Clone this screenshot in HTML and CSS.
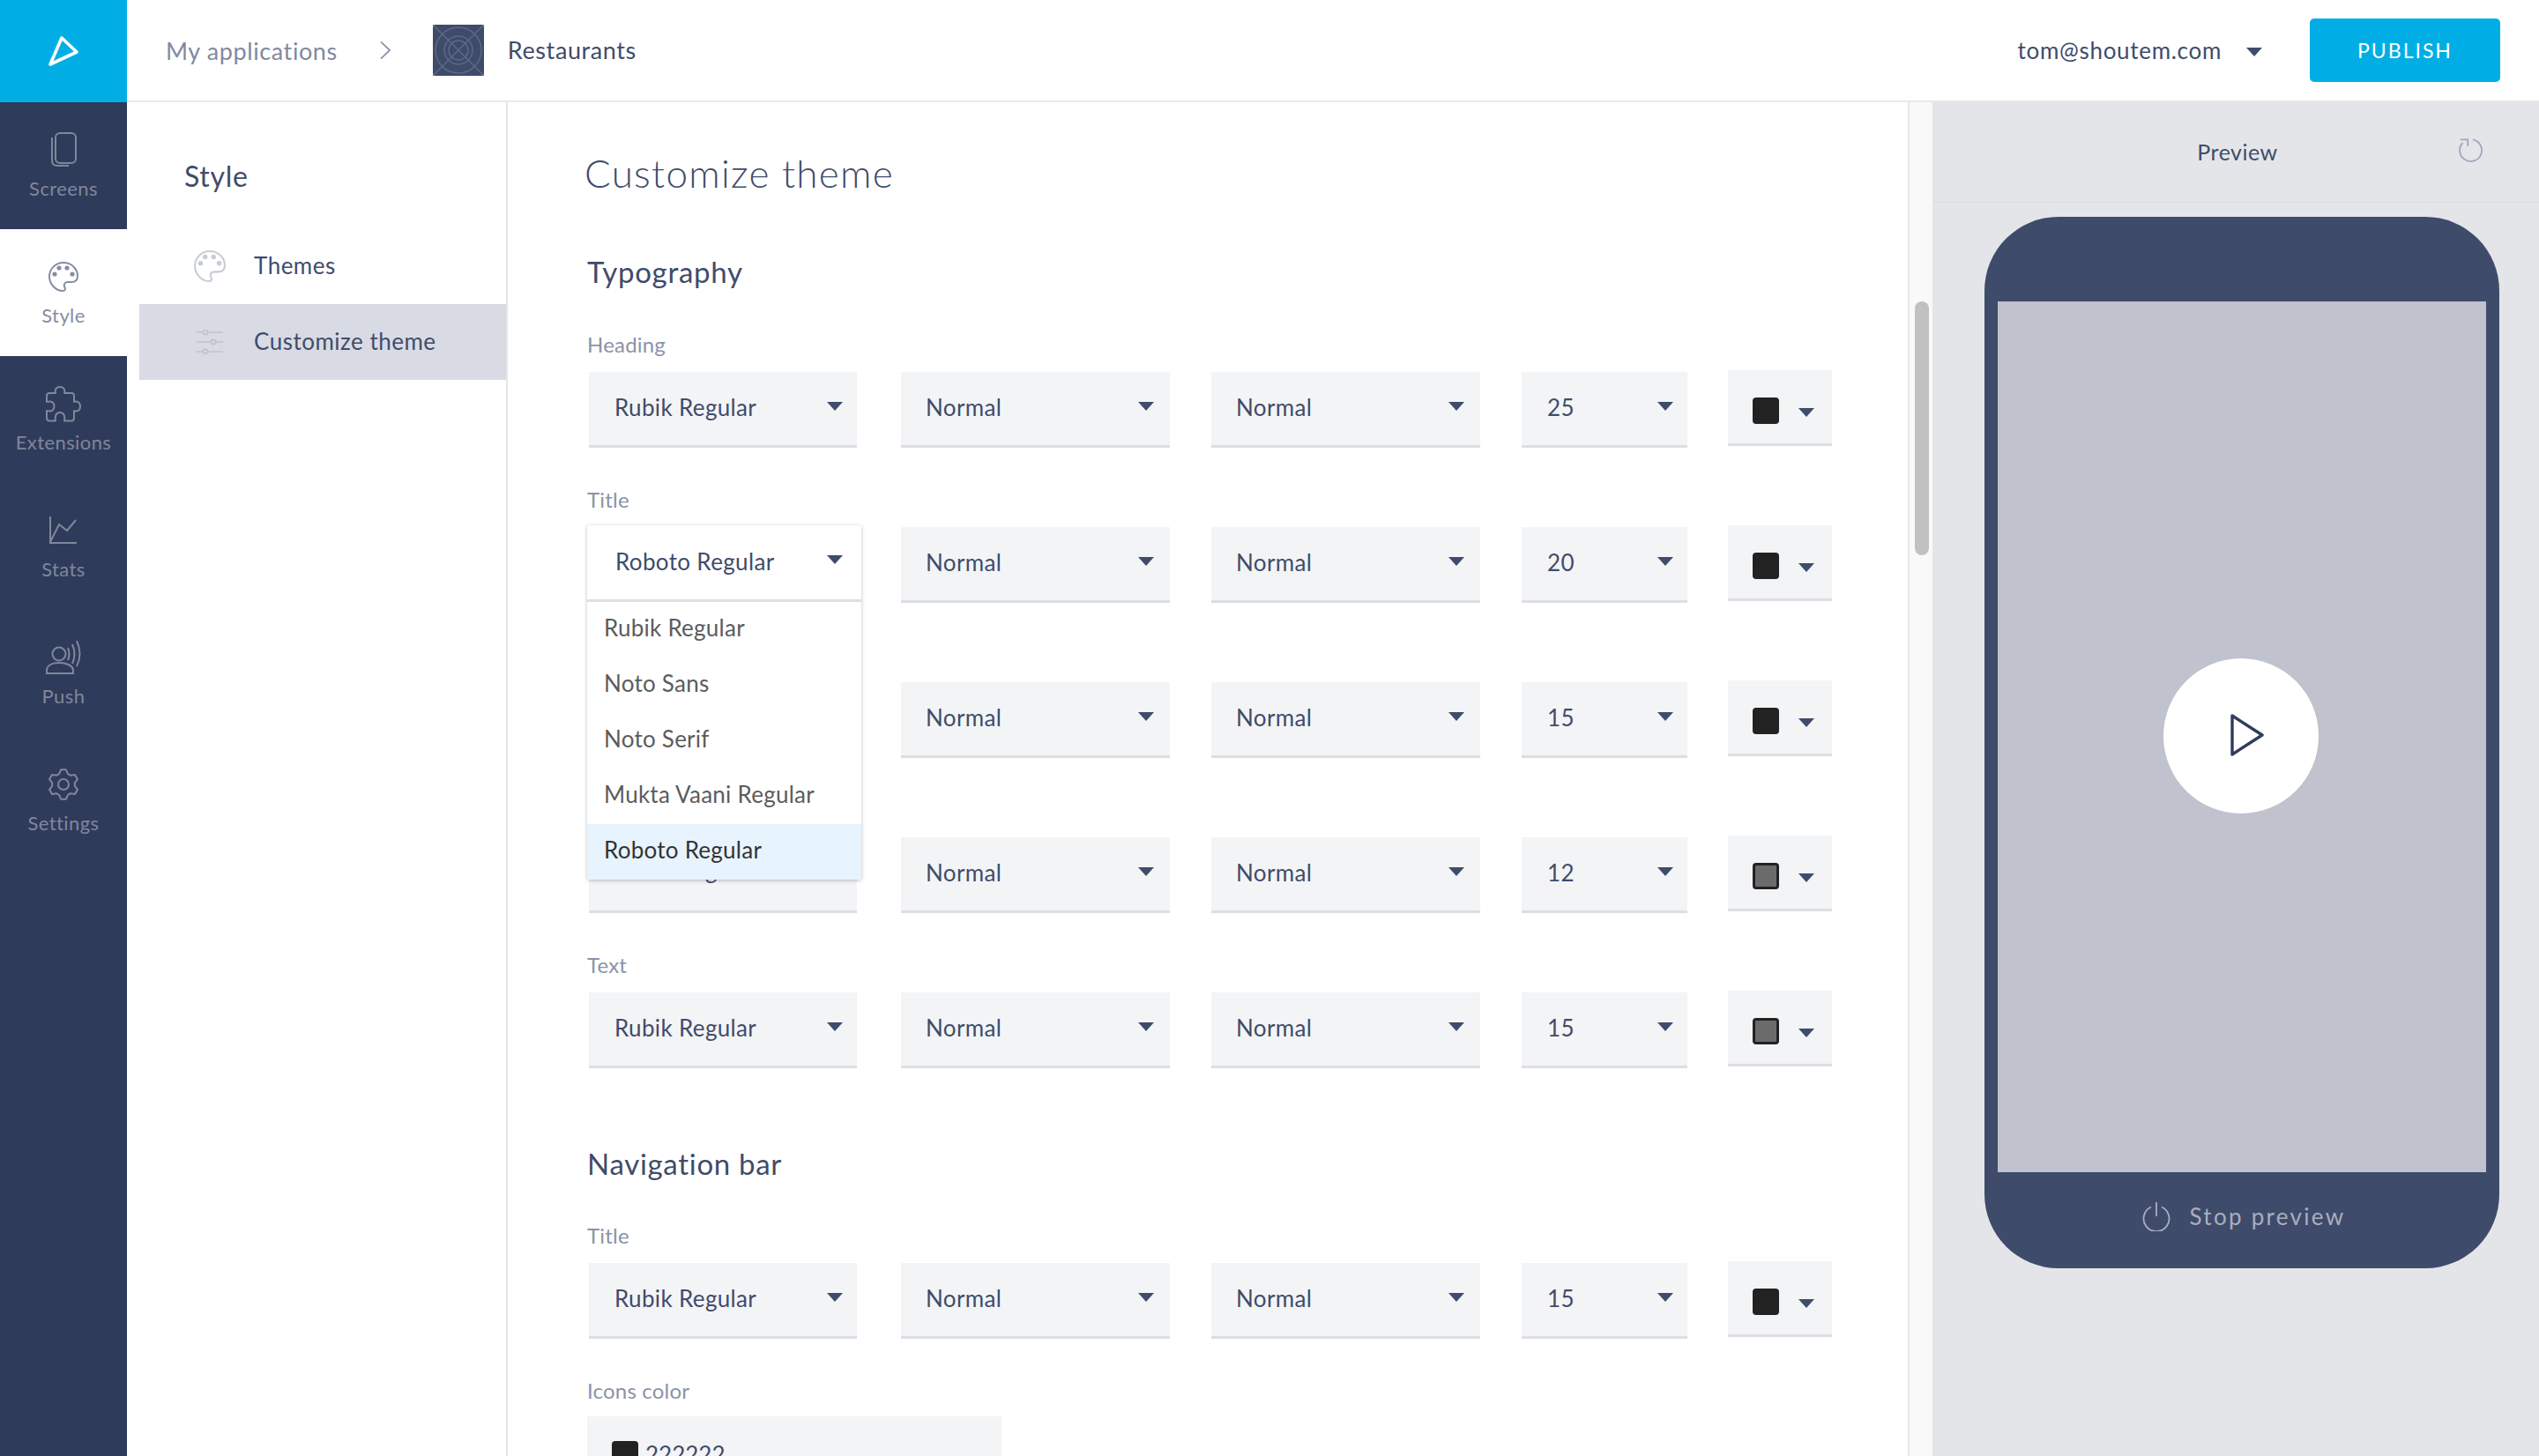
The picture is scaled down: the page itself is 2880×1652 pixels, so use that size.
FILE: index.html
```html
<!DOCTYPE html>
<html lang="en">
<head>
    <meta charset="UTF-8">
    <title>Customize theme</title>
    <link rel="stylesheet" href="styles.css">
</head>
<body>
<div class="app">
    <!-- left navigation -->
    <nav class="side-nav">
        <div class="logo">
            <svg width="36" height="36" viewBox="0 0 36 36"><path d="M16 3 L33 19 L3 33 Z" fill="none" stroke="#fff" stroke-width="3.6" stroke-linejoin="round"/></svg>
        </div>
        <a class="nav-item">
            <svg width="30" height="40" viewBox="0 0 30 40" fill="none" stroke="currentColor" stroke-width="2"><rect x="6" y="1" width="23" height="34" rx="5"/><path d="M2 6 V32 C2 36 4 38 8 38 H21"/></svg>
            <span>Screens</span>
        </a>
        <a class="nav-item active">
            <svg width="34" height="34" viewBox="0 0 34 34" fill="none" stroke="currentColor" stroke-width="2"><path d="M17 1 C8 1 1 8 1 17 C1 25 8 33 16 33 C20 33 19 30 18 28 C17 25 19 23 22 23 L26 23 C31 23 33 20 33 16 C33 8 26 1 17 1 Z"/><g fill="currentColor" stroke="none"><circle cx="7" cy="14" r="2.6"/><circle cx="12" cy="7" r="2.6"/><circle cx="21" cy="7" r="2.6"/><circle cx="27" cy="14" r="2.6"/></g></svg>
            <span>Style</span>
        </a>
        <a class="nav-item">
            <svg width="40" height="41" viewBox="0 0 40 41" fill="none" stroke="currentColor" stroke-width="2" stroke-linejoin="round"><path d="M4 8 H11 C10 5 11 1 16 1 C21 1 22 5 21 8 H29 Q32 8 32 11 V18 C33.5 17 39 17 39 23 C39 29 33.5 29 32 28 V36 Q32 39.5 29 39.5 H21 C22 35 21 30 16 30 C11 30 10 35 11 39.5 H4 Q1 39.5 1 36 V28 C7 29.5 9.5 27 9.5 23 C9.5 19 7 16.5 1 18 V11 Q1 8 4 8 Z"/></svg>
            <span>Extensions</span>
        </a>
        <a class="nav-item">
            <svg width="32" height="32" viewBox="0 0 32 32" fill="none" stroke="currentColor" stroke-width="2"><path d="M1 0 V30 H31"/><path d="M1 29 L11 9 L20 16 L30 4"/></svg>
            <span>Stats</span>
        </a>
        <a class="nav-item">
            <svg width="40" height="38" viewBox="0 0 40 38" fill="none" stroke="currentColor" stroke-width="2"><circle cx="15" cy="15" r="7.5"/><path d="M1 37 V34 C1 28 7 25 15 25 C23 25 31 28 31 34 V37 Z"/><path d="M25 8 Q28 15 25 22"/><path d="M30 4 Q35 15 30 26"/><path d="M35 0 Q42 15 35 29"/></svg>
            <span>Push</span>
        </a>
        <a class="nav-item">
            <svg width="36" height="38" viewBox="0 0 36 38" fill="none" stroke="currentColor" stroke-width="2" stroke-linejoin="round"><path d="M13.13 6.95 L15.05 2.26 H20.95 L22.87 6.95 L26 8.76 L31.02 8.07 L33.98 13.19 L30.87 17.19 V20.81 L33.98 24.81 L31.02 29.93 L26 29.24 L22.87 31.05 L20.95 35.74 H15.05 L13.13 31.05 L10 29.24 L4.98 29.93 L2.02 24.81 L5.13 20.81 V17.19 L2.02 13.19 L4.98 8.07 L10 8.76 Z"/><circle cx="18" cy="19" r="6"/></svg>
            <span>Settings</span>
        </a>
    </nav>

    <div class="page">
        <!-- top bar -->
        <header class="top-bar">
            <a class="crumb">My applications</a>
            <svg class="crumb-arrow" width="12" height="20" viewBox="0 0 12 20" fill="none" stroke="#7f89a2" stroke-width="1.6"><path d="M1 0.5 L11 10 L1 19.5"/></svg>
            <svg class="app-icon" width="58" height="58" viewBox="0 0 58 58" fill="none" stroke="#5d6883" stroke-width="1.5"><rect width="58" height="58" rx="3" fill="#3f4b6b" stroke="none"/><path d="M0 0 L58 58 M58 0 L0 58"/><circle cx="29" cy="29" r="26"/><circle cx="29" cy="29" r="16"/><circle cx="29" cy="29" r="11"/></svg>
            <span class="app-name">Restaurants</span>
            <div class="account">
                <span>tom@shoutem.com</span>
                <i class="caret"></i>
            </div>
            <button class="publish">PUBLISH</button>
        </header>

        <div class="workspace">
            <!-- style menu -->
            <aside class="sub-nav">
                <h2 class="sub-title">Style</h2>
                <a class="sub-item">
                    <svg width="36" height="36" viewBox="0 0 34 34" fill="none" stroke="#c8ccd6" stroke-width="2"><path d="M17 1 C8 1 1 8 1 17 C1 25 8 33 16 33 C20 33 19 30 18 28 C17 25 19 23 22 23 L26 23 C31 23 33 20 33 16 C33 8 26 1 17 1 Z"/><g fill="#c8ccd6" stroke="none"><circle cx="7" cy="14" r="2.6"/><circle cx="12" cy="7" r="2.6"/><circle cx="21" cy="7" r="2.6"/><circle cx="27" cy="14" r="2.6"/></g></svg>
                    <span>Themes</span>
                </a>
                <a class="sub-item active">
                    <svg width="36" height="28" viewBox="0 0 36 28" fill="none" stroke="#bfc3cf" stroke-width="1.6"><path d="M3 3 H33 M3 14 H33 M3 25 H33"/><circle cx="13" cy="3" r="2.6" fill="#d8dbe3"/><circle cx="22" cy="14" r="2.6" fill="#d8dbe3"/><circle cx="13" cy="25" r="2.6" fill="#d8dbe3"/></svg>
                    <span>Customize theme</span>
                </a>
            </aside>

            <!-- theme settings -->
            <main class="content">
                <h1 class="page-title">Customize theme</h1>

                <h2 class="section-title">Typography</h2>

                <label class="row-label">Heading</label>
                <div class="font-row">
                    <div class="select"><span>Rubik Regular</span><i class="caret"></i></div>
                    <div class="select"><span>Normal</span><i class="caret"></i></div>
                    <div class="select"><span>Normal</span><i class="caret"></i></div>
                    <div class="select size"><span>25</span><i class="caret"></i></div>
                    <div class="color-select"><b class="swatch"></b><i class="caret"></i></div>
                </div>

                <label class="row-label">Title</label>
                <div class="font-row">
                    <div class="select open">
                        <div class="dropdown">
                            <div class="dropdown-head"><span>Roboto Regular</span><i class="caret"></i></div>
                            <div class="dropdown-item">Rubik Regular</div>
                            <div class="dropdown-item">Noto Sans</div>
                            <div class="dropdown-item">Noto Serif</div>
                            <div class="dropdown-item">Mukta Vaani Regular</div>
                            <div class="dropdown-item current">Roboto Regular</div>
                        </div>
                    </div>
                    <div class="select"><span>Normal</span><i class="caret"></i></div>
                    <div class="select"><span>Normal</span><i class="caret"></i></div>
                    <div class="select size"><span>20</span><i class="caret"></i></div>
                    <div class="color-select"><b class="swatch"></b><i class="caret"></i></div>
                </div>

                <label class="row-label"></label>
                <div class="font-row">
                    <div class="select"></div>
                    <div class="select"><span>Normal</span><i class="caret"></i></div>
                    <div class="select"><span>Normal</span><i class="caret"></i></div>
                    <div class="select size"><span>15</span><i class="caret"></i></div>
                    <div class="color-select"><b class="swatch"></b><i class="caret"></i></div>
                </div>

                <label class="row-label"></label>
                <div class="font-row">
                    <div class="select under-menu"><span>Rubik Regular</span></div>
                    <div class="select"><span>Normal</span><i class="caret"></i></div>
                    <div class="select"><span>Normal</span><i class="caret"></i></div>
                    <div class="select size"><span>12</span><i class="caret"></i></div>
                    <div class="color-select"><b class="swatch gray"></b><i class="caret"></i></div>
                </div>

                <label class="row-label">Text</label>
                <div class="font-row">
                    <div class="select"><span>Rubik Regular</span><i class="caret"></i></div>
                    <div class="select"><span>Normal</span><i class="caret"></i></div>
                    <div class="select"><span>Normal</span><i class="caret"></i></div>
                    <div class="select size"><span>15</span><i class="caret"></i></div>
                    <div class="color-select"><b class="swatch gray"></b><i class="caret"></i></div>
                </div>

                <h2 class="section-title nav-bar-title">Navigation bar</h2>

                <label class="row-label">Title</label>
                <div class="font-row">
                    <div class="select"><span>Rubik Regular</span><i class="caret"></i></div>
                    <div class="select"><span>Normal</span><i class="caret"></i></div>
                    <div class="select"><span>Normal</span><i class="caret"></i></div>
                    <div class="select size"><span>15</span><i class="caret"></i></div>
                    <div class="color-select"><b class="swatch"></b><i class="caret"></i></div>
                </div>

                <label class="row-label">Icons color</label>
                <div class="color-input"><b class="swatch"></b><span>222222</span></div>
            </main>

            <div class="scroll-track"><div class="scroll-thumb"></div></div>

            <!-- phone preview -->
            <section class="preview">
                <div class="preview-head">
                    <span>Preview</span>
                    <svg class="reload" width="28" height="28" viewBox="0 0 28 28" fill="none" stroke="#a0a6b9" stroke-width="1.8"><path d="M16 1.3 A12.5 12.5 0 1 1 4.5 5"/><path d="M1.7 1.3 H10.3 V9"/></svg>
                </div>
                <div class="phone">
                    <div class="phone-screen">
                        <div class="play">
                            <svg width="40" height="50" viewBox="0 0 40 50" fill="none" stroke="#2f3c5b" stroke-width="3.4" stroke-linejoin="round"><path d="M3 3 L37 25 L3 47 Z"/></svg>
                        </div>
                    </div>
                    <div class="phone-bar">
                        <svg width="32" height="34" viewBox="0 0 32 34" fill="none" stroke="#a9aebf" stroke-width="1.8"><path d="M10 6.5 A14.5 14.5 0 1 0 22 6.5"/><path d="M16 1 V17"/></svg>
                        <span>Stop preview</span>
                    </div>
                </div>
            </section>
        </div>
    </div>
</div>
</body>
</html>
```

FILE: styles.css
```css
* {
    margin: 0;
    padding: 0;
    box-sizing: border-box;
}

html, body {
    height: 100%;
    overflow: hidden;
}

body {
    font-family: "Lato", "Noto Sans", sans-serif;
    color: #3f4c6b;
    background-color: #ffffff;
}

.app {
    display: flex;
    height: 100vh;
}

/* left navigation */
.side-nav {
    width: 144px;
    flex-shrink: 0;
    background-color: #2f3b5a;
}

.logo {
    height: 116px;
    background-color: #00aee5;
    display: flex;
    align-items: center;
    justify-content: center;
}

.nav-item {
    height: 144px;
    display: grid;
    grid-template-rows: 44px 28px;
    row-gap: 8px;
    justify-items: center;
    align-items: center;
    padding-top: 32px;
    color: #7f879c;
    font-size: 22px;
    line-height: 28px;
    letter-spacing: 0.4px;
}

.nav-item.active {
    background-color: #ffffff;
    color: #858da3;
}

.page {
    flex: 1;
    min-width: 0;
    display: flex;
    flex-direction: column;
}

/* top bar */
.top-bar {
    height: 116px;
    flex-shrink: 0;
    display: flex;
    align-items: center;
    padding: 0 44px 0 44px;
    border-bottom: 2px solid #e9e9eb;
}

.crumb {
    color: #7f89a2;
    font-size: 27px;
    letter-spacing: 0.6px;
}

.crumb-arrow {
    margin-left: 48px;
}

.app-icon {
    margin-left: 48px;
}

.app-name {
    margin: 0 0 2px 27px;
    font-size: 27px;
    letter-spacing: 0.6px;
}

.account {
    margin-left: auto;
    display: flex;
    align-items: center;
    font-size: 26px;
    letter-spacing: 0.7px;
}

.account .caret {
    margin-left: 28px;
    margin-top: 4px;
}

.publish {
    margin-left: 54px;
    width: 216px;
    height: 72px;
    border: none;
    border-radius: 5px;
    background-color: #00aee5;
    color: #ffffff;
    font-family: inherit;
    font-size: 23px;
    letter-spacing: 2px;
}

.caret {
    display: block;
    width: 0;
    height: 0;
    border-left: 9px solid transparent;
    border-right: 9px solid transparent;
    border-top: 10px solid #3f4c6b;
}

.workspace {
    flex: 1;
    min-height: 0;
    display: flex;
}

/* style menu */
.sub-nav {
    width: 432px;
    flex-shrink: 0;
    padding-left: 14px;
    border-right: 2px solid #e4e5ea;
}

.sub-title {
    padding: 64px 0 0 51px;
    height: 143px;
    font-size: 32px;
    font-weight: 400;
    line-height: 40px;
    letter-spacing: 0.7px;
}

.sub-item {
    height: 86px;
    display: flex;
    align-items: center;
    padding-left: 62px;
    font-size: 26px;
    letter-spacing: 0.5px;
}

.sub-item span {
    margin: 0 0 2px 32px;
}

.sub-item.active {
    background-color: #d8dbe3;
}

/* theme settings */
.content {
    flex: 1;
    min-width: 0;
    overflow: hidden;
    padding: 55px 0 0 90px;
}

.page-title {
    height: 50px;
    font-size: 44px;
    font-weight: 300;
    line-height: 50px;
    letter-spacing: 1.3px;
    margin-left: -3px;
}

.section-title {
    height: 40px;
    margin: 67px 0 49px 0;
    font-size: 33px;
    font-weight: 400;
    line-height: 40px;
    letter-spacing: 0.7px;
}

.nav-bar-title {
    margin-top: 88px;
    margin-bottom: 48px;
}

.row-label {
    display: block;
    height: 30px;
    margin-bottom: 15px;
    color: #8a93a8;
    font-size: 24px;
    line-height: 28px;
    letter-spacing: 0.2px;
}

.font-row {
    display: grid;
    grid-template-columns: 354px 352px 352px 234px 118px;
    margin: 0 0 45px 2px;
}

.select {
    position: relative;
    width: 304px;
    height: 86px;
    display: flex;
    align-items: center;
    justify-content: space-between;
    padding: 0 16px 3px 29px;
    background-color: #f3f4f6;
    border-bottom: 3px solid #dcdee4;
    font-size: 26px;
    letter-spacing: 0.35px;
}

.select .caret {
    margin-bottom: 3px;
}

.select.under-menu {
    padding-bottom: 10px;
}

.font-row .select:nth-child(2),
.font-row .select:nth-child(3) {
    width: 305px;
    padding-left: 28px;
    padding-right: 18px;
}

.select.size {
    width: 188px;
}

/* open font menu */
.dropdown {
    position: absolute;
    top: -2px;
    left: -2px;
    width: 311px;
    z-index: 5;
    background-color: #ffffff;
    border-radius: 3px;
    box-shadow: 0 1px 4px rgba(60, 70, 90, 0.35);
    overflow: hidden;
}

.dropdown-head {
    height: 87px;
    display: flex;
    align-items: center;
    justify-content: space-between;
    padding: 0 21px 3px 32px;
    border-bottom: 3px solid #dfe0e5;
}

.dropdown-item {
    height: 63px;
    padding: 0 19px;
    color: #5c5c5c;
    line-height: 59px;
    letter-spacing: 0.25px;
}

.dropdown-item.current {
    color: #333333;
    background-color: #e7f4fe;
}

.color-select {
    width: 118px;
    height: 86px;
    margin-top: -2px;
    display: flex;
    align-items: center;
    padding: 8px 0 0 28px;
    background-color: #f3f4f6;
    border-bottom: 3px solid #dcdee4;
}

.color-select .caret {
    margin: 4px 0 0 22px;
}

.swatch {
    display: block;
    width: 30px;
    height: 30px;
    flex-shrink: 0;
    border-radius: 4px;
    background-color: #222222;
}

.swatch.gray {
    background-color: #6b6b6b;
    border: 3px solid #222222;
}

.color-input {
    width: 470px;
    height: 86px;
    margin-top: -2px;
    display: flex;
    align-items: center;
    gap: 8px;
    padding: 0 0 0 28px;
    background-color: #f3f4f6;
    font-size: 26px;
}

/* scrollbar */
.scroll-track {
    width: 28px;
    flex-shrink: 0;
    padding: 226px 4px 0 6px;
    background-color: #f9f9f9;
    border-left: 2px solid #e8e8ea;
}

.scroll-thumb {
    width: 16px;
    height: 288px;
    border-radius: 8px;
    background-color: #c1c1c1;
}

/* phone preview */
.preview {
    width: 688px;
    flex-shrink: 0;
    background-color: #e4e5e9;
}

.preview-head {
    position: relative;
    height: 114px;
    display: flex;
    align-items: center;
    justify-content: center;
    padding-left: 4px;
    border-bottom: 2px solid #dfe0e5;
    font-size: 25px;
    letter-spacing: 0.5px;
}

.reload {
    position: absolute;
    right: 63px;
    top: 41px;
}

.phone {
    width: 584px;
    height: 1193px;
    margin: 16px 0 0 59px;
    padding-top: 96px;
    border-radius: 84px;
    background-color: #3f4b6b;
}

.phone-screen {
    width: 554px;
    height: 988px;
    margin-left: 15px;
    display: flex;
    align-items: center;
    justify-content: center;
    background-color: #c0c2cd;
}

.play {
    width: 176px;
    height: 176px;
    margin: 0 3px 2px 0;
    border-radius: 50%;
    background-color: #ffffff;
    display: flex;
    align-items: center;
    justify-content: center;
    padding: 0 0 2px 14px;
}

.phone-bar {
    height: 99px;
    display: flex;
    align-items: center;
    justify-content: center;
    gap: 22px;
    padding-left: 4px;
    color: #a9aebf;
    font-size: 26px;
    letter-spacing: 2.3px;
}
```
